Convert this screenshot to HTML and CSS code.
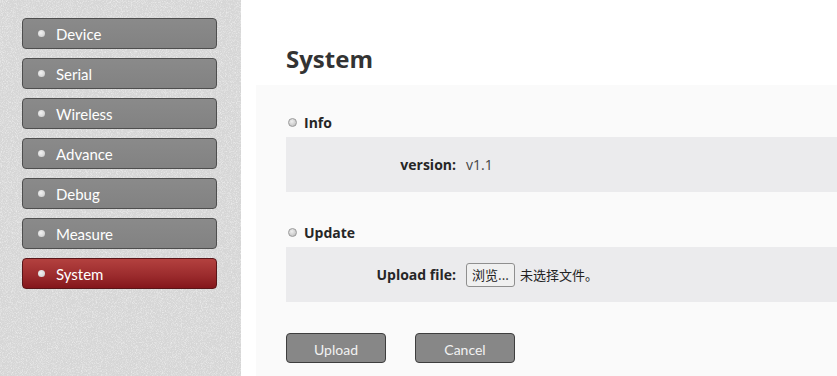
FILE: index.html
```html
<!DOCTYPE html>
<html>
<head>
<meta charset="utf-8">
<link rel="stylesheet" href="styles.css">
</head>
<body>
<div class="page">
  <aside class="sidebar">
    <svg class="noise" width="100%" height="100%" aria-hidden="true">
      <filter id="n">
        <feTurbulence type="fractalNoise" baseFrequency="1.2" numOctaves="1" stitchTiles="stitch"/>
        <feColorMatrix type="matrix" values="0 0 0 0 1  0 0 0 0 1  0 0 0 0 1  0 0 0 1.4 -0.62"/>
      </filter>
      <rect width="100%" height="100%" filter="url(#n)"/>
    </svg>
    <nav class="nav">
      <a class="nav-item"><span class="dot"></span>Device</a>
      <a class="nav-item"><span class="dot"></span>Serial</a>
      <a class="nav-item"><span class="dot"></span>Wireless</a>
      <a class="nav-item"><span class="dot"></span>Advance</a>
      <a class="nav-item"><span class="dot"></span>Debug</a>
      <a class="nav-item"><span class="dot"></span>Measure</a>
      <a class="nav-item active"><span class="dot"></span>System</a>
    </nav>
  </aside>
  <main class="main">
    <h1 class="title">System</h1>
    <div class="panel">
      <div class="section-head"><span class="sdot"></span>Info</div>
      <div class="box">
        <span class="label">version:</span>
        <span class="value">v1.1</span>
      </div>
      <div class="section-head second"><span class="sdot"></span>Update</div>
      <div class="box">
        <span class="label">Upload file:</span>
        <span class="value"><span class="file-btn">浏览...</span><span class="file-none">未选择文件。</span></span>
      </div>
      <div class="actions">
        <button class="btn">Upload</button>
        <button class="btn">Cancel</button>
      </div>
    </div>
  </main>
</div>
</body>
</html>
```
FILE: styles.css
```css
html, body {
  margin: 0;
  padding: 0;
  height: 100%;
  overflow: hidden;
}
body {
  font-family: "Open Sans", "Noto Sans CJK SC", sans-serif;
  background: #ffffff;
}
.page {
  display: flex;
  height: 376px;
}
.sidebar {
  position: relative;
  width: 241px;
  flex: none;
  background: #d6d6d6;
  overflow: hidden;
}
.noise {
  position: absolute;
  inset: 0;
  display: block;
}
.nav {
  position: relative;
  display: flex;
  flex-direction: column;
  gap: 9px;
  padding: 18px 0 0 22px;
}
.nav-item {
  box-sizing: border-box;
  width: 195px;
  height: 31px;
  display: flex;
  align-items: center;
  border: 1px solid #4e4e4e;
  border-radius: 4px;
  background: linear-gradient(#8a8a8a, #828282);
  color: #ffffff;
  font-family: Lato, "Liberation Sans", sans-serif;
  font-size: 15px;
  padding-left: 15px;
}
.nav-item.active {
  background: linear-gradient(#b3413f, #9a2a2c 60%, #84161b);
  border-color: #5a1518;
}
.dot {
  width: 7px;
  height: 7px;
  border-radius: 50%;
  background: radial-gradient(circle at 40% 40%, #f2f2f2, #c8c8c8);
  margin-right: 11px;
}
.main {
  flex: 1;
  display: flex;
  flex-direction: column;
}
.title {
  margin: 0;
  padding: 41px 0 0 45px;
  height: 44px;
  font-size: 24px;
  line-height: 36px;
  font-weight: 700;
  color: #333333;
}
.panel {
  flex: 1;
  margin-left: 15px;
  background: #fafafa;
  padding: 24px 0 0 30px;
}
.section-head {
  height: 26px;
  margin-bottom: 2px;
  display: flex;
  align-items: center;
  font-size: 14px;
  font-weight: 700;
  color: #262626;
}
.section-head.second {
  margin-top: 27px;
}
.sdot {
  width: 9px;
  height: 9px;
  border-radius: 50%;
  border: 1px solid #9a9a9a;
  background: radial-gradient(circle at 40% 35%, #f0f0f0, #b8b8b8);
  box-sizing: border-box;
  margin: 0 7px 0 2px;
}
.box {
  height: 55px;
  background: #ebebed;
  display: flex;
  align-items: center;
}
.label {
  width: 170px;
  text-align: right;
  font-size: 14px;
  font-weight: 700;
  color: #262626;
}
.value {
  margin-left: 10px;
  font-size: 14px;
  color: #444444;
  display: flex;
  align-items: center;
}
.file-btn {
  box-sizing: border-box;
  height: 24px;
  width: 49px;
  display: flex;
  align-items: center;
  justify-content: center;
  border: 1px solid #8f8f8f;
  border-radius: 3px;
  background: #f0f0f0;
  font-family: "Noto Sans CJK SC", sans-serif;
  font-size: 13px;
  color: #222222;
}
.file-none {
  margin-left: 5px;
  font-family: "Noto Sans CJK SC", sans-serif;
  font-size: 13px;
  color: #222222;
}
.actions {
  display: flex;
  gap: 29px;
  margin-top: 31px;
}
.btn {
  box-sizing: border-box;
  width: 100px;
  height: 30px;
  border: 1px solid #3e3e3e;
  border-radius: 4px;
  background: #878787;
  color: #f2f2f2;
  font-family: Lato, "Liberation Sans", sans-serif;
  font-size: 14px;
  padding: 2px 0 0;
}
```
